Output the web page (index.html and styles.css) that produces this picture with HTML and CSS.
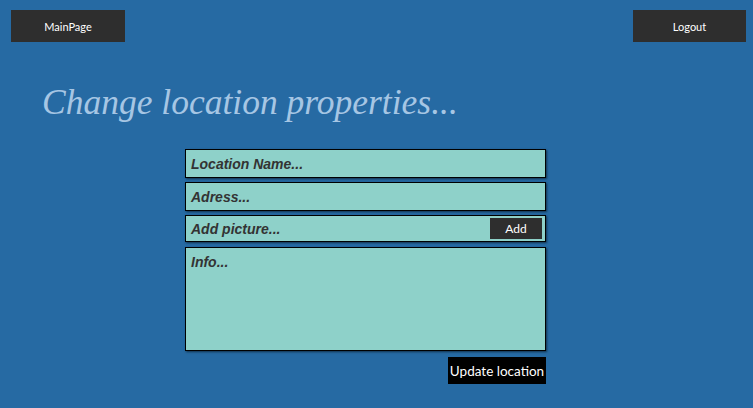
FILE: index.html
```html
<!DOCTYPE html>
<html>
<head>
<meta charset="utf-8">
<link rel="stylesheet" href="styles.css">
</head>
<body>
<header class="topbar">
  <button class="navbtn">MainPage</button>
  <button class="navbtn">Logout</button>
</header>
<h1 class="title">Change location properties...</h1>
<form class="form">
  <div class="field"><span class="ph">Location Name...</span></div>
  <div class="field"><span class="ph">Adress...</span></div>
  <div class="field field-pic"><span class="ph">Add picture...</span><span class="addbtn">Add</span></div>
  <div class="field field-info"><span class="ph">Info...</span></div>
  <div class="actions"><span class="update">Update location</span></div>
</form>
</body>
</html>
```
FILE: styles.css
```css
html, body { margin: 0; padding: 0; }
body {
  background: #266aa3;
  width: 753px;
  height: 408px;
  overflow: hidden;
  font-family: "Liberation Sans", Arial, sans-serif;
}
.topbar {
  display: flex;
  justify-content: space-between;
  padding: 10px 7px 0 11px;
}
.navbtn {
  width: 114px;
  height: 32px;
  background: #2e2e2e;
  border: none;
  color: #fff;
  font-family: "Lato", sans-serif;
  font-size: 11px;
  padding: 0;
}
.navbtn + .navbtn { width: 113px; }
.title {
  margin: 40px 0 0 42px;
  font-family: "Liberation Serif", serif;
  font-style: italic;
  font-weight: normal;
  font-size: 35.5px;
  line-height: 40px;
  color: #a6c6e4;
}
.form {
  margin: 27px 0 0 185px;
  width: 361px;
  display: flex;
  flex-direction: column;
  gap: 4px;
}
.field {
  box-sizing: border-box;
  height: 29px;
  background: #8ed1c9;
  border: 1px solid #000;
  box-shadow: 1px 1px 2px rgba(0,0,0,0.55);
  display: flex;
  align-items: center;
  padding: 0 5px;
}
.ph {
  font-weight: bold;
  font-style: italic;
  font-size: 14px;
  color: #333;
}
.field-pic {
  height: 27px;
  justify-content: space-between;
  padding-right: 3px;
}
.addbtn {
  width: 52px;
  height: 21px;
  background: #2e2e2e;
  color: #fff;
  font-family: "Lato", sans-serif;
  font-size: 12px;
  display: flex;
  align-items: center;
  justify-content: center;
}
.field-info {
  height: 104px;
  align-items: flex-start;
  padding-top: 6px;
  margin-top: 1px;
}
.actions {
  display: flex;
  justify-content: flex-end;
  margin-top: 2px;
}
.update {
  width: 98px;
  height: 27px;
  background: #000;
  color: #fff;
  font-family: "Lato", sans-serif;
  font-weight: 400;
  font-size: 13.5px;
  display: flex;
  align-items: center;
  justify-content: center;
}
```
